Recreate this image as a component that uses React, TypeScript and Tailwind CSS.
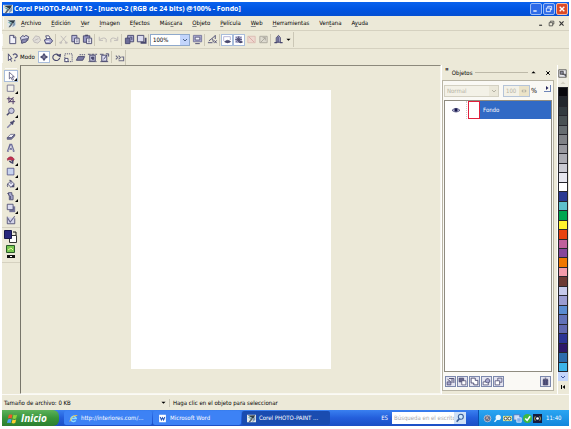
import React from "react";

const INK = "#48486e";
const LILAC = "#a9a9cf";
const FADED = "#bdb9b8";

const icons: Record<string, React.ReactNode> = {
  doc: <path d="M3 1.500h4.500l2 2v7H3zM7 2v2h2" fill="#f2f2fa" stroke={INK} />,
  open: (
    <>
      <path d="M1.500 4l3-2.500 1 1.500 2-1.500 3 1.500-1 4-6 3z" fill="#d5d5ea" stroke={INK} />
      <path d="M2.500 10l1-4 6-1-2 4z" fill="#8c8cb4" stroke={INK} strokeWidth=".8" />
    </>
  ),
  scan: <path d="M2 6l3-4 4 1 1.500 4-3 3-4-1zM4 7l4-2" fill="#e0ddd8" stroke={FADED} />,
  print: (
    <>
      <path d="M4 5.500L3 2h3.500l1.500 3" fill="#fff" stroke={INK} />
      <path d="M1.500 6.500l3-1.500h4l2 2.500-2.500 3h-5z" fill={LILAC} stroke={INK} />
      <path d="M3 8h4" stroke="#fff" />
    </>
  ),
  cut: <path d="M3 2l6 7M9 2L3 9M2 9h2v1H2zM8 9h2v1H8z" stroke={FADED} fill="none" />,
  copy: (
    <>
      <path d="M2 1.500h5.500v7H2z" fill="#b9b9dc" stroke={INK} />
      <path d="M5 4.500h5v6H5z" fill="#f2f2fa" stroke={INK} />
      <path d="M6.500 6.500h2M6.500 8.500h2" stroke={INK} strokeWidth=".8" />
    </>
  ),
  paste: (
    <>
      <path d="M1.500 2h7v7h-7z" fill="#9696c2" stroke={INK} />
      <path d="M3.500 1.500h3" stroke={INK} strokeWidth="1.500" />
      <path d="M5 4.500h5.500v6H5z" fill="#f2f2fa" stroke={INK} />
      <path d="M6.500 6.500h2.500M6.500 8.500h2.500" stroke={INK} strokeWidth=".8" />
    </>
  ),
  undo: <path d="M10 9V5.500Q8 3 3 6M2.500 3v4h4" stroke={FADED} fill="none" />,
  redo: <path d="M2 9V5.500Q4 3 9 6M9.500 3v4h-4" stroke={FADED} fill="none" />,
  import: (
    <>
      <path d="M4 1.500h6.500v7H4z" fill={LILAC} stroke={INK} />
      <path d="M1.500 4.500h5v6h-5z" fill="#6c6c98" stroke={INK} />
      <path d="M6.500 3.500h2v3" stroke={INK} fill="none" />
    </>
  ),
  export: (
    <>
      <path d="M1.500 1.500h7v7h-7z" fill="#dcdcf0" stroke={INK} />
      <path d="M5 9.500h5.500V4" stroke={INK} strokeWidth="2" fill="none" />
    </>
  ),
  screen: (
    <>
      <path d="M1.500 1.500h9v7h-9z" fill={LILAC} stroke="#77779c" />
      <path d="M3.500 3.500h5v3h-5z" fill="#f2f2fa" stroke={INK} strokeWidth=".8" />
      <path d="M3.500 10.500h5" stroke={INK} />
    </>
  ),
  ramp: <path d="M1 9.500h5M2 7.500l4-3 3-3v4M6 5l1 4M8 7l2.500 3M10.500 7L8 10" stroke={INK} fill="none" />,
  maskEye: (
    <>
      <path d="M2 7V2h8v4" stroke={LILAC} fill="#fff" />
      <path d="M3 8q4-3.500 7.500 0-4 3-7.500 0z" fill={INK} stroke={INK} strokeWidth=".6" />
    </>
  ),
  objEye: (
    <>
      <path d="M2 2h7v7H2z" stroke="#8484b2" strokeDasharray="1 1" fill={LILAC} />
      <path d="M3 3l5 5M8 3L3 8M1.500 5.500h8M5.500 1.500v7" stroke={INK} />
      <path d="M5 8.500q3-2.500 6 0-3 2.500-6 0z" fill={INK} />
    </>
  ),
  redBox: (
    <>
      <path d="M2 2.500h8v7H2z" stroke="#dcbcb4" fill="#eed8cf" />
      <path d="M3 3l6 6" stroke="#d8a8a4" />
    </>
  ),
  maskBox: <path d="M2 2.500h8v7H2zM3 9l5-5M5 4h3v3" stroke="#aaa69d" fill="#dedbd0" />,
  launch: (
    <>
      <path d="M3.500 9V4L6 1.500 8 4v5z" fill={LILAC} stroke={INK} />
      <path d="M5.500 3v6M1.500 9.500h3M7.500 9.500h3" stroke={INK} strokeWidth="1.300" />
    </>
  ),
  whats: (
    <>
      <path d="M1.500 2v7.500l2-2L5 10.500M3.500 7.500h2L1.500 2" stroke={INK} fill="#fff" />
      <path d="M6.500 3.500q2-2.500 4-.5T8.500 6.500M8.500 8.500V10" stroke="#55557c" fill="none" strokeWidth="1.300" />
    </>
  ),
  move: <path d="M6 2v8M2 6h8M4.500 4L6 2l1.500 2zM4.500 8L6 10l1.500-2zM4 4.500L2 6l2 1.500zM8 4.500L10 6 8 7.500z" stroke={INK} fill={INK} strokeWidth="1.100" />,
  rotate: (
    <>
      <path d="M9.500 6.500A3.800 3.500 0 1 1 8 3" stroke={INK} fill="none" strokeWidth="1.200" />
      <path d="M6 3.500l5-1.500-.5 4z" fill={INK} />
    </>
  ),
  scale: (
    <>
      <path d="M2 2h8v8.500H2z" stroke={INK} strokeDasharray="1.200 1" fill="none" />
      <path d="M2 7h3.500v3.500H2z" stroke={INK} fill="#fff" />
    </>
  ),
  skew: (
    <>
      <path d="M1.500 9l2-4h7l-2 4z" fill="#7c7ca4" stroke={INK} />
      <path d="M5 3h6" stroke={INK} strokeDasharray="1.500 .8" />
    </>
  ),
  distort: (
    <>
      <path d="M3 3.500h6v6.500H3z" fill="#c6c6e0" stroke={INK} />
      <path d="M5 5.500h2.500V8H5zM1 2.500h10" stroke={INK} strokeDasharray="3 1" fill={INK} />
      <path d="M1.500 10.500h9" stroke={INK} strokeWidth=".8" />
    </>
  ),
  persp: (
    <>
      <path d="M3 3.500h5.500V10H3z" fill="#dcdcf0" stroke={INK} />
      <path d="M5 8l4-5M7.500 2h3v3M1 2.500h4M1.500 10.500h8.500" stroke={INK} fill="none" />
    </>
  ),
  apply: <path d="M2 4l2 2-2 2M5 4l2 2-2 2M8 5.500h2.500v4H5" stroke="#6c6c84" fill="none" strokeWidth="1.200" />,
  pick: <path d="M4 1.500v8l2-2 1.500 3.500 1.500-.7L7.500 7H10z" fill="#fff" stroke={INK} strokeWidth=".9" />,
  mask: <path d="M1.500 2.500h8v7.500h-8z" fill="#f3f1ea" stroke="#6c6c8c" />,
  crop: <path d="M3.500 2v6H11M1 4.500h7.500V11M3 9.500l6-7" stroke="#54406c" fill="none" strokeWidth="1.200" />,
  zoom: (
    <>
      <circle cx="6.500" cy="4.500" r="3.300" fill="#c8c8e0" stroke={INK} />
      <path d="M4 7l-3 3" stroke={INK} strokeWidth="1.800" />
    </>
  ),
  dropper: (
    <>
      <path d="M1.500 10.500l5-5" stroke="#8484a8" strokeWidth="1.800" />
      <path d="M5.500 3.500l3 3M7 5l3-3" stroke={INK} strokeWidth="2.200" />
    </>
  ),
  eraser: (
    <>
      <path d="M1.500 8l4-4h5l-4 4z" fill="#ececf6" stroke={INK} strokeWidth=".8" />
      <path d="M1.500 8h5l4-4v2l-4 4h-5z" fill="#77779c" stroke={INK} strokeWidth=".8" />
    </>
  ),
  text: (
    <>
      <path d="M2 10.500L5 2h1.500l3 8.500M4 7h4" stroke="#6c6c98" fill="none" strokeWidth="2.200" />
      <path d="M3 9.500L6 3l2.500 6.500" stroke="#dcdcf0" fill="none" strokeWidth=".8" />
    </>
  ),
  redeye: (
    <>
      <path d="M1.500 4.500Q6-.5 10 5L8 8Q5 3.500 2 6.500z" fill="#c3304e" stroke="#8e2340" strokeWidth=".7" />
      <path d="M4 7l3 2.500M8 6v4.500" stroke={INK} strokeWidth="1.800" />
    </>
  ),
  rect: <path d="M1.500 1.500h8v8h-8z" fill="#c8d4ee" stroke="#55558a" />,
  fill: (
    <>
      <path d="M2 6l4-4 4 4-4 4z" fill="#e6e6f6" stroke={INK} />
      <path d="M4 2q0-1.500 2 0v4M2 6q-1 1 0 3.500" stroke={INK} fill="none" />
      <path d="M6 10l4-4v4z" fill={INK} />
    </>
  ),
  brush: (
    <>
      <path d="M3 2h4v3h1.500v5.500H4V5H3z" fill={LILAC} stroke={INK} />
      <path d="M5.500 6v4M1.500 3h2" stroke={INK} />
    </>
  ),
  shadow: (
    <>
      <path d="M4 4h7v7H4z" fill="#77779c" />
      <path d="M1.500 1.500h7v6.500h-7z" fill="#dcdcf0" stroke={INK} />
    </>
  ),
  effect: (
    <>
      <path d="M1.500 2v8.500h9V4" fill="#d5d5ea" stroke={INK} />
      <path d="M2 3.500l3 5 5.500-7" stroke="#66668c" fill="none" strokeWidth="1.300" />
    </>
  ),
  objNew: (
    <>
      <path d="M1.500 6.500h5v4h-5z" fill={LILAC} stroke={INK} />
      <path d="M4 2h6.500v6M8 2v6M2 3l4 3" stroke={INK} fill="none" strokeWidth="1.200" />
    </>
  ),
  objMask: (
    <>
      <path d="M1.500 1.500h6v5h-6z" fill="#66668c" stroke={INK} />
      <path d="M5 5h5.500v5.500H5z" fill="#fff" stroke={INK} />
    </>
  ),
  objLens: <path d="M1.500 1.500h5.500v3h3.500v6H5V8H1.500z" fill="#fff" stroke={INK} strokeWidth="1.200" />,
  objOval: (
    <>
      <path d="M1.500 6.500h7v4h-7z" fill="#fff" stroke={INK} />
      <path d="M4 6q1-4.500 4-4 3 1 2.500 4.500-3 3-6.500-.5z" fill={LILAC} stroke={INK} />
    </>
  ),
  objCopy: (
    <>
      <path d="M5 1.500h5.500V7H5z" fill="#dcdcf0" stroke={INK} />
      <path d="M1.500 5h6v5.500h-6z" fill="#fff" stroke={INK} />
    </>
  ),
  trash: (
    <>
      <path d="M3 4h6v6.500H3z" fill="#6c6c98" stroke="#2c2c54" />
      <path d="M2.500 3h7M5 1.500h2M5 5v5M7 5v5" stroke="#2c2c54" />
    </>
  ),
  app: (
    <>
      <path d="M0 1h12v10H0z" fill="#e4e8e8" />
      <path d="M1 2l10-.5L8 7 6.500 5z" fill="#2c3c48" />
      <path d="M1 4l5 1-1.500 1.500z" fill="#4aa0a4" />
      <path d="M6 5l1.500 2L4 11H2z" fill="#56616c" />
      <path d="M8 7l3-4v5l-4 3z" fill="#7c98b4" />
    </>
  ),
  ie: (
    <>
      <path d="M9 8.500A3.500 3.500 0 1 1 9.500 6H3" fill="none" stroke="#8cdcff" strokeWidth="2" />
      <path d="M1 10Q4 1 11 2" fill="none" stroke="#f5c542" strokeWidth="1.200" />
    </>
  ),
  word: (
    <>
      <path d="M1.500 1h9v10h-9z" fill="#fff" />
      <path d="M3 4l1.500 4L6 5l1.500 3L9 4" stroke="#2456b8" fill="none" strokeWidth="1.400" />
    </>
  ),
  flag: (
    <>
      <path d="M2 2q2-1 4 0L5 6Q3 5 1 6z" fill="#f0572c" />
      <path d="M7 2q2 1 4 0l-1 4q-2 1-4 0z" fill="#8cd43c" />
      <path d="M1 7q2-1 4 0l-1 4Q2 10 0 11z" fill="#4aa0f8" />
      <path d="M6 7q2 1 4 0l-1 4q-2 1-4 0z" fill="#fcd032" />
    </>
  ),
  lens: (
    <>
      <circle cx="7" cy="4.500" r="3" fill="#cfeaff" stroke="#3b5e98" strokeWidth="1.300" />
      <path d="M5 7l-3 3.500" stroke="#3b5e98" strokeWidth="2" />
    </>
  ),
  sound: (
    <>
      <circle cx="6" cy="6" r="4.500" fill="#63708c" stroke="#c8cede" />
      <path d="M4 3l4 5M7 3L4 7" stroke="#e9b9a0" />
    </>
  ),
  trayLens: (
    <>
      <circle cx="7" cy="4.500" r="3.500" fill="#e9f7ff" />
      <path d="M5 7l-3 3.500" stroke="#e9f7ff" strokeWidth="1.800" />
    </>
  ),
  eyes: (
    <>
      <path d="M0 2.500h12v7H0z" fill="#d7e59b" />
      <circle cx="3.500" cy="6" r="2" fill="#fff" stroke="#222" />
      <circle cx="8.500" cy="6" r="2" fill="#fff" stroke="#222" />
    </>
  ),
  net: (
    <>
      <path d="M1 1h8v7H1z" fill="#cbdcf6" stroke="#4870b8" />
      <path d="M5 5h6v6H5z" fill="#87b1ec" stroke="#e8f0ff" />
    </>
  ),
  ok: (
    <>
      <circle cx="6" cy="6" r="6" fill="#3fb843" />
      <path d="M3 6l2.500 2.500L9.500 3" stroke="#fff" fill="none" strokeWidth="2" />
    </>
  ),
  radio: (
    <>
      <path d="M0 0h12v12H0z" fill="#141c40" />
      <path d="M3 3q-2 3 0 6M9 3q2 3 0 6" stroke="#e8d75a" fill="none" />
      <circle cx="6" cy="6" r="1.800" fill="#fff" />
    </>
  ),
  restore: <path d="M4 4V2h6v5H8M2 4.500h6V10H2z" stroke="currentColor" fill="none" strokeWidth="1.200" />,
  min: <path d="M2 9h5" stroke="currentColor" strokeWidth="2" />,
  close: <path d="M2.500 2.500l7 7M9.500 2.500l-7 7" stroke="currentColor" strokeWidth="2" />,
  down: <path d="M2 4l4 4 4-4" stroke="currentColor" fill="none" strokeWidth="2" />,
  triDown: <path d="M1 4h10l-5 5z" fill="currentColor" />,
  triUp: <path d="M1 8h10L6 3z" fill="currentColor" />,
  first: <path d="M2 2h2v8H2zM10 2v8L5 6z" fill="currentColor" />,
  eye: (
    <>
      <path d="M0 6.500q6-6 12 0-6 5-12 0z" fill="#c9cbe4" stroke="#26265c" />
      <circle cx="6" cy="6" r="2.500" fill="#16164c" />
    </>
  ),
  paletteMenu: (
    <>
      <path d="M1 1h10v10H1z" fill="#e8e8ee" stroke="#444" />
      <path d="M3 3h4v4H3zM6 7h4v3" fill="#8b8ba0" stroke="#333" />
    </>
  ),
  spin: <path d="M5 3L2 6l3 3zM7 3l3 3-3 3z" fill="currentColor" />,
  flyout: <path d="M4 2l5 4-5 4z" fill="currentColor" />,
};

function Icon({ name, className = "size-[10px]" }: { name: string; className?: string }) {
  return (
    <svg viewBox="0 0 12 12" className={`${className} shrink-0`} aria-hidden="true">
      {icons[name]}
    </svg>
  );
}

function Tool({ name, active = false }: { name: string; active?: boolean }) {
  return (
    <button
      aria-label={name}
      className={`flex h-3 w-3 shrink-0 items-center justify-center ${active ? "bg-white outline -outline-offset-1 outline-[#a9bddb]" : ""}`}
    >
      <Icon name={name} className={active ? "size-[10px]" : "size-[11px]"} />
    </button>
  );
}

function Sep() {
  return <span className="mx-px h-3 w-px shrink-0 bg-[#cbc7b6]" />;
}

function Grip() {
  return <span className="mr-[3px] h-3 w-px shrink-0 bg-[#fbfaf6]" />;
}

const menus = [
  ["", "A", "rchivo"],
  ["", "E", "dición"],
  ["", "V", "er"],
  ["", "I", "magen"],
  ["E", "f", "ectos"],
  ["Más", "c", "ara"],
  ["", "O", "bjeto"],
  ["", "P", "elícula"],
  ["", "W", "eb"],
  ["", "H", "erramientas"],
  ["Ven", "t", "ana"],
  ["A", "y", "uda"],
];

const tools: [string, boolean][] = [
  ["pick", true],
  ["mask", true],
  ["crop", false],
  ["zoom", true],
  ["dropper", false],
  ["eraser", false],
  ["text", false],
  ["redeye", true],
  ["rect", true],
  ["fill", true],
  ["brush", true],
  ["shadow", true],
  ["effect", false],
];

const swatches = [
  "#08080c", "#22272c", "#333b3f", "#495153", "#676d70", "#808286", "#98989e", "#ababb2", "#cacad2", "#e6e6ee",
  "#ffffff", "#2b3a92", "#5ec0cb", "#00a650", "#fff32d", "#e8430f", "#c0619c", "#86479a", "#f07800", "#f29dab",
  "#6b3a33", "#c6caea", "#9a9cd0", "#5a8cd0", "#6272b8", "#6068b0", "#2c3494", "#2e1868", "#2c6cac", "#3cb4e8",
];

function TitleBar() {
  return (
    <header className="flex h-[14px] shrink-0 items-center bg-linear-to-b from-[#0a62ee] via-[#0054e3] to-[#0450d2] px-px text-white">
      <Icon name="app" />
      <h1 className="ml-px flex-1 truncate font-['Open_Sans','Noto_Sans',sans-serif] text-[7px] leading-[12px] font-bold whitespace-nowrap">
        Corel PHOTO-PAINT 12 - [nuevo-2 (RGB de 24 bits) @100% - Fondo]
      </h1>
      <div className="flex gap-px">
        <button aria-label="Minimizar" className="flex size-3 items-center justify-center rounded-[2px] border border-[#9dbcf5] bg-[#2e6be8]">
          <Icon name="min" className="size-2" />
        </button>
        <button aria-label="Restaurar" className="flex size-3 items-center justify-center rounded-[2px] border border-[#9dbcf5] bg-[#2e6be8]">
          <Icon name="restore" className="size-2" />
        </button>
        <button aria-label="Cerrar" className="flex size-3 items-center justify-center rounded-[2px] border border-[#f3b9a5] bg-[#dc4a26]">
          <Icon name="close" className="size-2" />
        </button>
      </div>
    </header>
  );
}

function MenuBar() {
  return (
    <nav className="flex h-[15px] shrink-0 items-center border-b border-[#d5d1c0] pr-1 pl-px">
      <Grip />
      <Icon name="app" className="size-[9px]" />
      <div className="ml-[5px] flex flex-1 gap-[10px]">
        {menus.map(([pre, key, post]) => (
          <button key={pre + key + post} className="whitespace-nowrap">
            {pre}
            <span className="underline decoration-[#888] underline-offset-1">{key}</span>
            {post}
          </button>
        ))}
      </div>
      <div className="flex gap-[3px] text-[#333]">
        <button aria-label="Minimizar documento"><Icon name="min" className="size-[7px]" /></button>
        <button aria-label="Restaurar documento"><Icon name="restore" className="size-[7px]" /></button>
        <button aria-label="Cerrar documento"><Icon name="close" className="size-[7px]" /></button>
      </div>
    </nav>
  );
}

function StandardBar() {
  return (
    <div className="flex h-[17px] shrink-0 items-center">
      <Grip />
      {["doc", "open", "scan", "print"].map((n) => <Tool key={n} name={n} />)}
      <Sep />
      {["cut", "copy", "paste"].map((n) => <Tool key={n} name={n} />)}
      <Sep />
      {["undo", "redo"].map((n) => <Tool key={n} name={n} />)}
      <Sep />
      {["import", "export"].map((n) => <Tool key={n} name={n} />)}
      <Sep />
      <label className="flex h-3 w-10 items-center border border-[#8fa9cc] bg-white">
        <select aria-label="Zoom" defaultValue="100%" className="min-w-0 flex-1 appearance-none bg-white pl-[2px]">
          <option>100%</option>
          <option>200%</option>
        </select>
        <span className="flex h-full w-[9px] items-center justify-center bg-[#c3d5fb] text-[#4d6185]">
          <Icon name="down" className="size-[6px]" />
        </span>
      </label>
      <span className="w-px" />
      <Tool name="screen" />
      <Sep />
      <Tool name="ramp" />
      <Sep />
      <Tool name="maskEye" active />
      <Tool name="objEye" active />
      <Tool name="redBox" />
      <Tool name="maskBox" />
      <Sep />
      <Tool name="launch" />
      <button aria-label="Más iniciadores" className="flex w-2 justify-center"><Icon name="triDown" className="size-[5px]" /></button>
      <span className="ml-px h-[15px] w-px bg-[#cbc7b6]" />
    </div>
  );
}

function PropertyBar() {
  return (
    <div className="flex h-[17px] shrink-0 items-center border-t border-[#d5d1c0]">
      <Grip />
      <Tool name="whats" />
      <span className="mx-[2px] w-4">Modo</span>
      <Tool name="move" active />
      {["rotate", "scale", "skew", "distort", "persp"].map((n) => <Tool key={n} name={n} />)}
      <Sep />
      <Tool name="apply" />
      <span className="h-[15px] w-px bg-[#cbc7b6]" />
    </div>
  );
}

function Toolbox() {
  return (
    <aside className="flex w-[18px] shrink-0 flex-col items-center pt-[3px]">
      <span className="mb-px h-px w-3 bg-[#fbfaf6]" />
      {tools.map(([name, fly]) => (
        <button
          key={name}
          aria-label={name}
          className={`relative flex h-3 w-[14px] shrink-0 items-center justify-center ${name === "pick" ? "border border-[#a9bddb] bg-white" : ""}`}
        >
          <Icon name={name} className="size-[10px]" />
          {fly && (
            <svg viewBox="0 0 3 3" className="absolute right-0 bottom-0 size-[3px]" aria-hidden="true">
              <path d="M3 0v3H0z" />
            </svg>
          )}
        </button>
      ))}
      <div className="mt-px w-full border-y border-[#d5d1c0] py-[2px]">
        <svg viewBox="0 0 18 30" className="h-[30px] w-[18px]" role="img" aria-label="Colores de papel y pintura">
          <path d="M7.500 5.500h7v7h-7z" fill="#fff" stroke="#333" />
          <path d="M2.500.5h7v8h-7z" fill="#28287c" stroke="#18184c" />
          <path d="M11 2h3v3" fill="none" stroke="#111" />
          <path d="M4.500 15.500h8v7h-8z" fill="#78c850" stroke="#2a5a2a" />
          <path d="M6 20l3-2 2 2" fill="none" stroke="#e8f4a0" />
          <path d="M5 25h8v3H5z" fill="#111" />
          <path d="M8 26h2v1H8z" fill="#fff" />
        </svg>
      </div>
    </aside>
  );
}

function ObjectsPanel() {
  return (
    <section className="flex w-[113px] shrink-0 flex-col border-l border-white">
      <div className="flex h-[15px] shrink-0 items-center gap-[3px] px-[3px]">
        <span className="text-[8px] leading-[8px] font-bold">&quot;</span>
        <h2>Objetos</h2>
        <span className="h-px flex-1 bg-[#bdb9a8]" />
        <button aria-label="Contraer"><Icon name="triUp" className="size-[5px]" /></button>
        <span className="h-px w-[3px]" />
        <button aria-label="Cerrar panel"><Icon name="close" className="size-[6px]" /></button>
      </div>
      <div className="mb-[3px] flex min-h-0 flex-1 flex-col border border-[#b8b4a4] bg-[#faf9f5] px-px">
        <div className="flex h-[19px] shrink-0 items-center gap-1 text-[#b5b2a4]">
          <label className="flex h-3 w-[55px] items-center border border-[#d3d0c2] bg-[#f3f1e7]">
            <select aria-label="Modo de fusión" disabled className="min-w-0 flex-1 appearance-none pl-[2px]">
              <option>Normal</option>
            </select>
            <span className="flex h-full w-[9px] items-center justify-center bg-[#ebe8da]"><Icon name="down" className="size-[6px]" /></span>
          </label>
          <label className="flex h-3 w-[27px] items-center border border-[#b5c4d8] bg-[#f3f1e7]">
            <input aria-label="Opacidad" disabled defaultValue="100" className="w-0 min-w-0 flex-1 pl-[2px]" />
            <span className="flex h-full w-[10px] items-center justify-center bg-[#ebe3c8]"><Icon name="spin" className="size-2" /></span>
          </label>
          <span className="-ml-[3px] text-[7px] text-black">%</span>
          <button aria-label="Opciones" className="mr-px mb-1 ml-auto border-r border-b border-[#6f86b8] text-[#26265c]"><Icon name="flyout" className="size-[6px]" /></button>
        </div>
        <div className="min-h-0 flex-1 border border-[#8f8c80] bg-white">
          <div className="flex h-[18px] items-stretch bg-[#316ac5] text-white">
            <button aria-label="Mostrar u ocultar" className="flex w-[22px] items-center justify-center border-r border-dotted border-[#ccc] bg-white">
              <Icon name="eye" className="size-2" />
            </button>
            <span className="w-px bg-white" />
            <span className="w-3 border border-[#e0203c] bg-white" />
            <span className="self-center pl-[3px]">Fondo</span>
          </div>
        </div>
        <div className="flex h-[18px] shrink-0 items-center gap-px px-px">
          {["objNew", "objMask", "objLens", "objOval", "objCopy", "trash"].map((n) => (
            <button
              key={n}
              aria-label={n}
              className={`flex size-[11px] items-center justify-center border border-[#7c88ac] bg-[#e4e4f0] ${n === "trash" ? "ml-auto" : ""}`}
            >
              <Icon name={n} className="size-[9px]" />
            </button>
          ))}
        </div>
      </div>
    </section>
  );
}

function Palette() {
  return (
    <aside className="ml-[3px] flex w-3 shrink-0 flex-col items-start border-l border-white pt-1 pb-px">
      <button aria-label="Menú de paleta"><Icon name="paletteMenu" className="size-[9px]" /></button>
      <button aria-label="Subir" className="flex h-[9px] w-[10px] items-center justify-center bg-[#eeece2] text-[#d3d0c2]"><Icon name="triUp" className="size-[6px]" /></button>
      <div className="flex min-h-0 w-[10px] flex-1 flex-col border border-[#26262c] bg-[#26262c]">
        {swatches.map((c) => (
          <button key={c} aria-label={`Color ${c}`} className="mb-px w-full flex-1 last:mb-0" style={{ backgroundColor: c }} />
        ))}
      </div>
      <button aria-label="Bajar" className="flex h-[9px] w-[10px] items-center justify-center bg-[#c3d5fb] text-[#4058a0]"><Icon name="down" className="size-[6px]" /></button>
      <button aria-label="Inicio de paleta" className="flex h-3 w-[10px] items-center justify-center"><Icon name="first" className="size-[6px]" /></button>
    </aside>
  );
}

function Taskbar() {
  const windows: [string, string, boolean][] = [
    ["ie", "http://interiores.com/...", false],
    ["word", "Microsoft Word", false],
    ["app", "Corel PHOTO-PAINT ...", true],
  ];
  return (
    <footer className="flex h-4 shrink-0 items-stretch bg-linear-to-b from-[#3a80f0] via-[#245edb] to-[#1c4fc4] text-white">
      <button className="flex w-[57px] shrink-0 items-center gap-[3px] rounded-r-md bg-linear-to-b from-[#5cb25a] via-[#37953a] to-[#2c7f30] pl-[5px] font-['Open_Sans','Noto_Sans',sans-serif] text-[10px] leading-[14px] font-bold italic">
        <Icon name="flag" className="size-[11px]" />
        Inicio
      </button>
      <div className="ml-[5px] flex gap-px py-px">
        {windows.map(([icon, label, active]) => (
          <button
            key={icon}
            className={`flex w-[88px] items-center gap-[3px] rounded-[2px] pl-[5px] whitespace-nowrap ${active ? "bg-[#1a4cb0]" : "bg-[#3d82f5]"}`}
          >
            <Icon name={icon} className="size-[9px]" />
            {label}
          </button>
        ))}
      </div>
      <div className="ml-auto flex items-center">
        <span className="mr-1">ES</span>
        <label className="flex h-3 w-[74px] items-center bg-white">
          <input aria-label="Búsqueda" placeholder="Búsqueda en el escrito" className="w-0 min-w-0 flex-1 pl-[2px] text-black placeholder:text-[#a8a8ac]" />
          <span className="flex h-full w-3 items-center justify-center bg-[#cfe0f6]"><Icon name="lens" /></span>
        </label>
        <div className="ml-3 flex h-full w-[91px] items-center gap-px border-l border-[#0b4fae] bg-linear-to-b from-[#2aa5f2] to-[#1187dc] pl-1">
          {["sound", "trayLens", "eyes", "net", "ok", "radio"].map((n) => <Icon key={n} name={n} className="size-[9px]" />)}
          <span className="ml-[3px]">11:40</span>
        </div>
      </div>
    </footer>
  );
}

export default function App() {
  return (
    <div className="h-screen bg-white p-[2px] pb-[3px] font-['DejaVu_Sans_Condensed','Noto_Sans',sans-serif] text-[6px] leading-[8px] text-black">
      <div className="flex h-full flex-col bg-[#ece9d8]">
        <TitleBar />
        <MenuBar />
        <StandardBar />
        <PropertyBar />
        <div className="flex min-h-0 flex-1">
          <Toolbox />
          <main className="flex min-w-0 flex-1 items-center justify-center border border-t-[#8c897c] border-r-[#f8f7f0] border-b-[#f8f7f0] border-l-[#77756a]">
            <div className="h-[279px] w-[200px] bg-white" />
          </main>
          <ObjectsPanel />
          <Palette />
        </div>
        <div className="flex h-4 shrink-0 items-center border-t border-[#fbfaf6] pl-[2px]">
          <span className="w-[157px]">Tamaño de archivo: 0 KB</span>
          <Icon name="triDown" className="size-[5px]" />
          <span className="ml-[3px] border-l border-[#cbc7b6] pl-[3px]">Haga clic en el objeto para seleccionar</span>
        </div>
        <Taskbar />
      </div>
    </div>
  );
}
